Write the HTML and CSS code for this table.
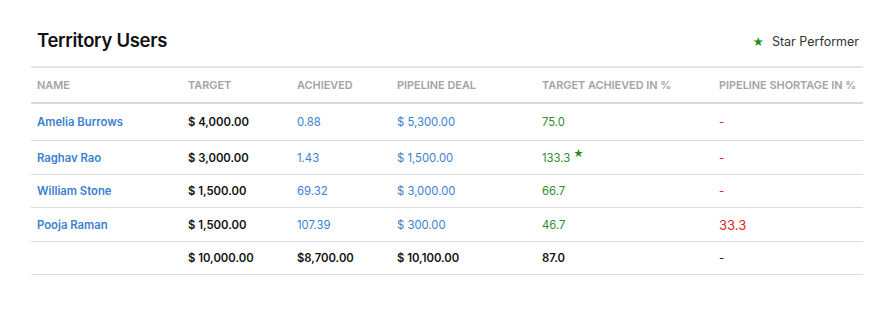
FILE: index.html
```html
<!DOCTYPE html>
<html>
<head>
<meta charset="utf-8">
<link rel="stylesheet" href="styles.css">
</head>
<body>
<div class="panel">
  <div class="head">
    <h1 class="title">Territory Users</h1>
    <div class="legend"><span class="star">★</span>Star Performer</div>
  </div>
  <table class="grid">
    <colgroup>
      <col class="c1"><col class="c2"><col class="c3"><col class="c4"><col class="c5"><col class="c6">
    </colgroup>
    <thead>
      <tr><th>NAME</th><th>TARGET</th><th>ACHIEVED</th><th>PIPELINE DEAL</th><th>TARGET ACHIEVED IN %</th><th>PIPELINE SHORTAGE IN %</th></tr>
    </thead>
    <tbody>
      <tr><td class="name">Amelia Burrows</td><td class="money">$ 4,000.00</td><td class="blue">0.88</td><td class="blue">$ 5,300.00</td><td class="green">75.0</td><td class="dash">-</td></tr>
      <tr><td class="name">Raghav Rao</td><td class="money">$ 3,000.00</td><td class="blue">1.43</td><td class="blue">$ 1,500.00</td><td class="green">133.3<span class="sup">★</span></td><td class="dash">-</td></tr>
      <tr><td class="name">William Stone</td><td class="money">$ 1,500.00</td><td class="blue">69.32</td><td class="blue">$ 3,000.00</td><td class="green">66.7</td><td class="dash">-</td></tr>
      <tr><td class="name">Pooja Raman</td><td class="money">$ 1,500.00</td><td class="blue">107.39</td><td class="blue">$ 300.00</td><td class="green">46.7</td><td class="short">33.3</td></tr>
      <tr class="total"><td></td><td class="money">$ 10,000.00</td><td class="money">$8,700.00</td><td class="money">$ 10,100.00</td><td class="money">87.0</td><td class="dash dark">-</td></tr>
    </tbody>
  </table>
</div>
</body>
</html>
```
FILE: styles.css
```css
html, body {
  margin: 0;
  padding: 0;
  background: #fff;
}
body {
  font-family: Inter, "Open Sans", sans-serif;
  color: #222;
}
.panel {
  padding: 24px 32px 0 31px;
  width: 832px;
}
.head {
  display: flex;
  justify-content: space-between;
  align-items: flex-start;
  height: 38px;
  padding: 4px 4px 0 6px;
}
.title {
  margin: 0;
  font-size: 18.5px;
  line-height: 24px;
  font-weight: 600;
  color: #111;
  letter-spacing: -0.3px;
}
.legend {
  font-size: 12.5px;
  line-height: 18px;
  color: #333;
  display: flex;
  align-items: center;
  margin-top: 5px;
}
.star {
  color: #228b22;
  font-size: 11px;
  margin-right: 8px;
}
.grid {
  width: 832px;
  border-collapse: collapse;
  table-layout: fixed;
  font-size: 11.3px;
}
.c1 { width: 151px; }
.c2 { width: 109px; }
.c3 { width: 100px; }
.c4 { width: 145px; }
.c5 { width: 177px; }
.c6 { width: 150px; }
.grid th {
  text-align: left;
  font-weight: 600;
  font-size: 10.9px;
  color: #a3a3a3;
  padding: 0 0 0 6px;
  height: 34px;
  border-top: 2px solid #e6e6e6;
  border-bottom: 2px solid #d8d8d8;
  white-space: nowrap;
}
.grid td {
  padding: 0 0 0 6px;
  height: 33px;
  border-bottom: 1px solid #dcdcdc;
  white-space: nowrap;
}
.grid tbody tr:nth-child(2n+1) td { height: 32px; }
.grid tbody tr:first-child td { height: 36px; }
.name { color: #3a7fd0; font-weight: 600; }
.money { color: #111; font-weight: 600; }
.blue { color: #3a7fd0; }
.green { color: #2e8b2e; }
.sup {
  color: #228b22;
  font-size: 10px;
  position: relative;
  top: -5px;
  margin-left: 3px;
}
.dash { color: #d22; }
.dash.dark { color: #111; }
.short { color: #e0261f; font-size: 13px; }
```
